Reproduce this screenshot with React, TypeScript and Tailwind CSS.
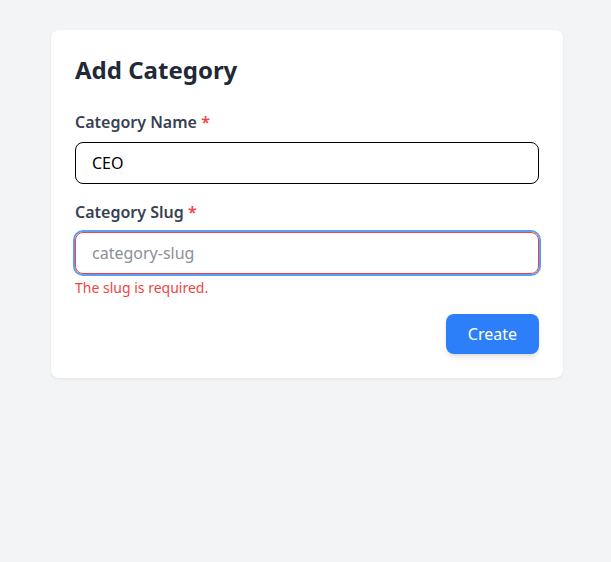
import React, { useState } from 'react';

const App: React.FC = () => {
  const [name, setName] = useState<string>('CEO');
  const [slug, setSlug] = useState<string>('');

  return (
    <div className="min-h-screen bg-[#f3f4f6] pt-[30px] font-['Noto_Sans',sans-serif]">
      <div className="ml-[51px] w-[512px] bg-white rounded-lg shadow-[0_1px_3px_rgba(0,0,0,0.08)] p-6">
        <h1 className="text-2xl font-bold text-[#1f2937] mb-6 leading-8">Add Category</h1>

        <label className="block text-base font-semibold text-[#374151] mb-2 leading-6">
          Category Name <span className="text-[#ef4444]">*</span>
        </label>
        <input
          value={name}
          onChange={(e) => setName(e.target.value)}
          className="block w-full h-[42px] px-4 text-base text-black border border-black rounded-lg outline-none"
        />

        <label className="block text-base font-semibold text-[#374151] mt-4 mb-2 leading-6">
          Category Slug <span className="text-[#ef4444]">*</span>
        </label>
        <input
          value={slug}
          onChange={(e) => setSlug(e.target.value)}
          placeholder="category-slug"
          className="block w-full h-[42px] px-4 text-base text-black border border-[#ef4444] rounded-lg outline-none ring-2 ring-[#5b9ef7] placeholder:text-[#8a8f98]"
        />
        <p className="mt-1 text-sm text-[#ef4444] leading-5">The slug is required.</p>

        <div className="flex justify-end mt-4">
          <button className="h-10 px-[22px] bg-[#2d7ff9] text-white text-base rounded-lg shadow-md">
            Create
          </button>
        </div>
      </div>
    </div>
  );
};

export default App;
